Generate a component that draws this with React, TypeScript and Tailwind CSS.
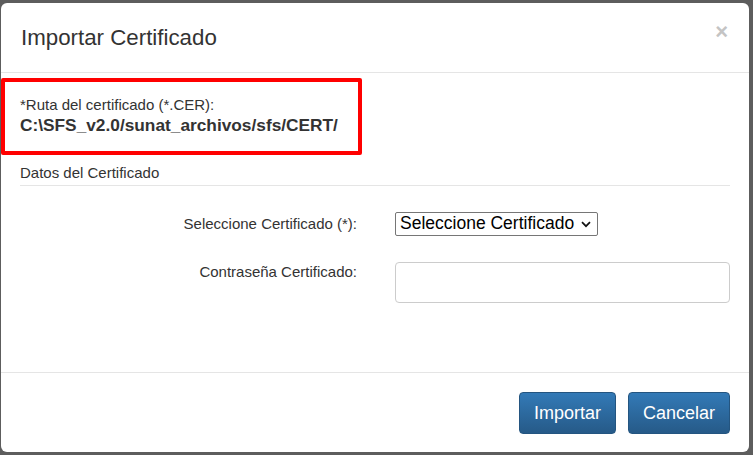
export default function App() {
  return (
    <div className="h-[455px] w-[753px] overflow-hidden bg-[#5d5d5d] pb-[3px] pl-[1px] pr-[4px] pt-[3px] font-['Liberation_Sans',Arial,sans-serif] text-[#333]">
      <div className="flex h-full flex-col rounded-[6px] bg-white">
        {/* header */}
        <div className="flex h-[70px] shrink-0 items-center justify-between border-b border-[#e5e5e5] pl-[20px] pr-[21px]">
          <h4 className="pt-[1px] text-[22.3px] leading-none">Importar Certificado</h4>
          <span className="mb-[12px] text-[22px] font-bold leading-none text-[#c4c4c4]">×</span>
        </div>

        {/* body */}
        <div className="flex-1">
          <div className="mt-[5px] h-[77px] w-[361px] rounded-[2px] border-[4px] border-[#ff0000] pl-[15px] pt-[13px]">
            <div className="text-[15px] leading-[20px]">*Ruta del certificado (*.CER):</div>
            <div className="text-[17.3px] font-bold leading-[20px]">C:\SFS_v2.0/sunat_archivos/sfs/CERT/</div>
          </div>

          <div className="mx-[19px] mt-[8px] border-b border-[#e5e5e5] pb-[2px] text-[15px] leading-[20px]">
            Datos del Certificado
          </div>

          <div className="mt-[26px] flex items-center">
            <label className="w-[356px] shrink-0 text-right text-[15px]">Seleccione Certificado (*):</label>
            <div className="relative ml-[38px] h-[24px] w-[203px]">
              <select className="h-full w-full appearance-none rounded-[2px] border border-[#767676] bg-white pl-[4px] text-[17.5px] leading-none text-black">
                <option>Seleccione Certificado</option>
              </select>
              <svg
                className="pointer-events-none absolute right-[7px] top-[9px]"
                width="10"
                height="7"
                viewBox="0 0 10 7"
                fill="none"
              >
                <path d="M1 1.2 L5 5.2 L9 1.2" stroke="#111" strokeWidth="1.7" />
              </svg>
            </div>
          </div>

          <div className="mt-[26px] flex items-start">
            <label className="-mt-[1px] w-[356px] shrink-0 text-right text-[15px]">Contraseña Certificado:</label>
            <input
              type="password"
              className="ml-[38px] h-[41px] w-[335px] rounded-[4px] border border-[#ccc] px-3 outline-none"
            />
          </div>
        </div>

        {/* footer */}
        <div className="flex h-[80px] shrink-0 items-start justify-end gap-[12px] border-t border-[#e5e5e5] pr-[19px] pt-[19px]">
          <button className="h-[42px] w-[97px] rounded-[4px] border border-[#245580] bg-gradient-to-b from-[#337ab7] to-[#265a88] text-[18px] text-white">
            Importar
          </button>
          <button className="h-[42px] w-[102px] rounded-[4px] border border-[#245580] bg-gradient-to-b from-[#337ab7] to-[#265a88] text-[18px] text-white">
            Cancelar
          </button>
        </div>
      </div>
    </div>
  );
}
